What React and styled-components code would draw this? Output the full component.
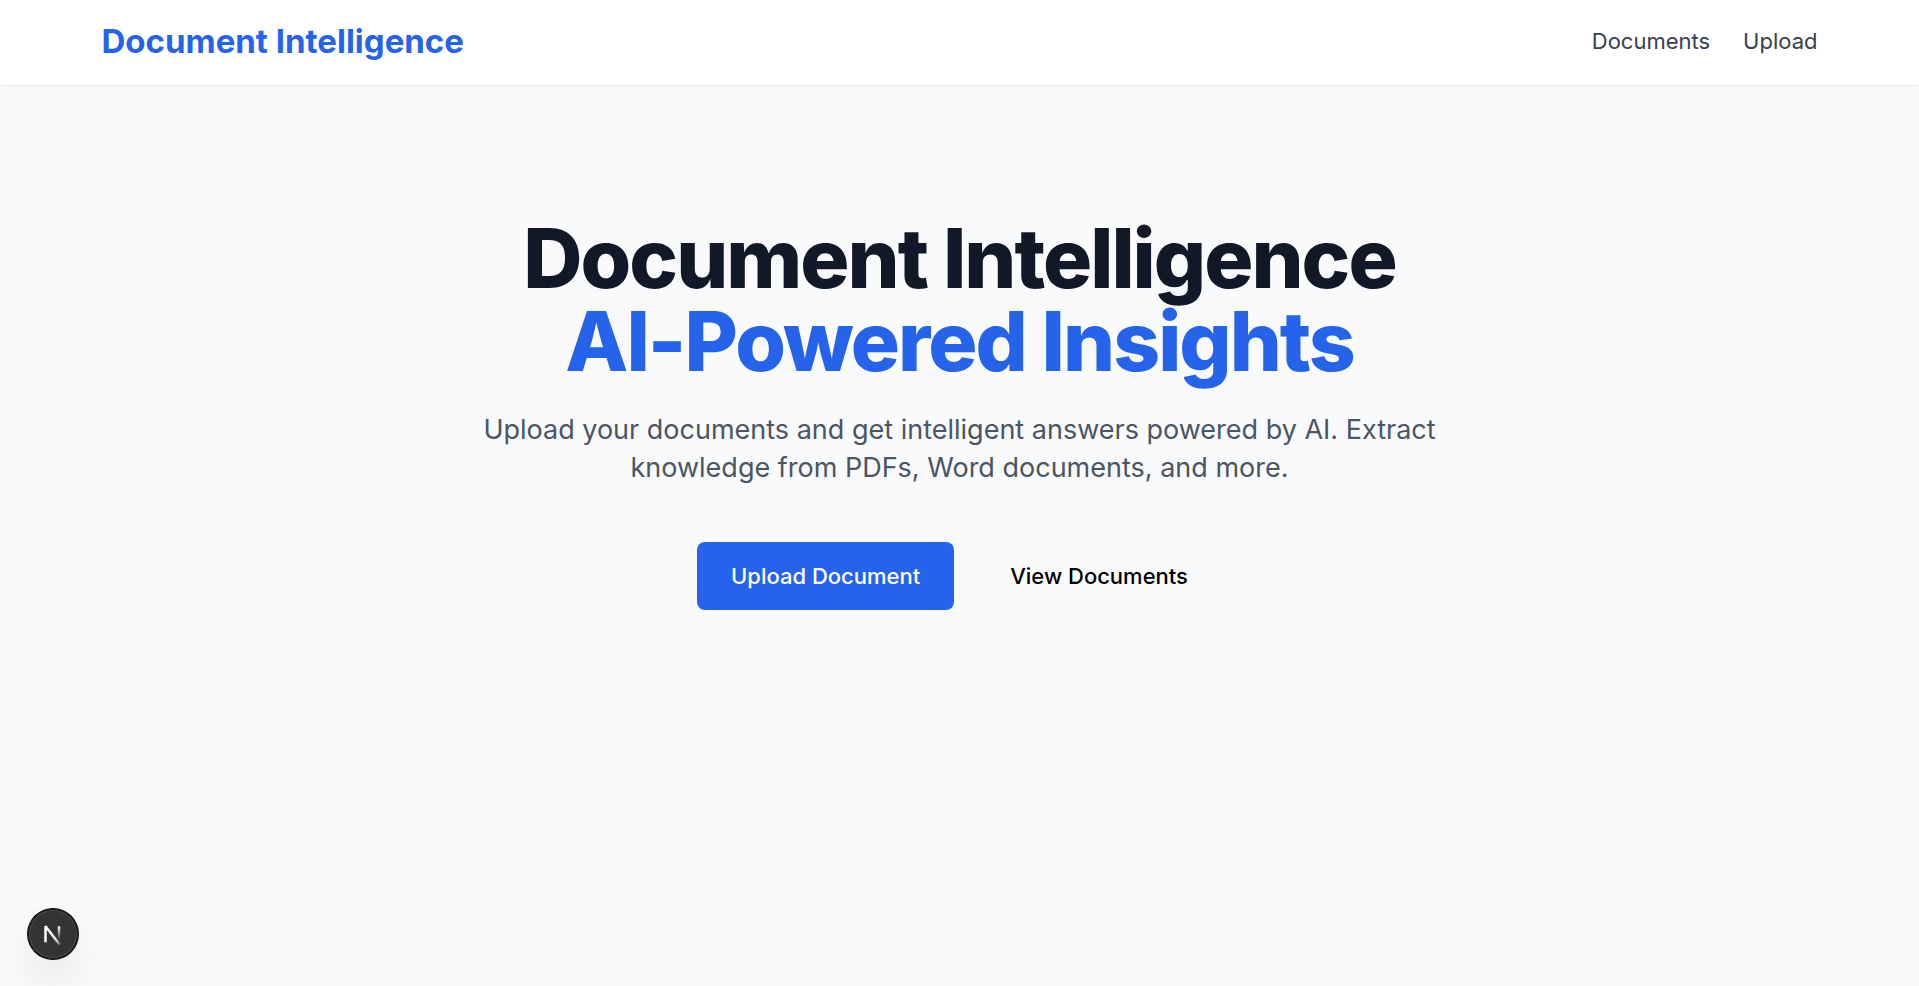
import React from "react";
import styled, { createGlobalStyle } from "styled-components";

const GlobalStyle = createGlobalStyle`
  *, *::before, *::after { box-sizing: border-box; }
  body {
    margin: 0;
    background: #f9fafb;
    color: #000;
    font-family: Inter, "Liberation Sans", sans-serif;
  }
`;

const Page = styled.div`
  min-height: 100vh;
  background: #f9fafc;
`;

const Header = styled.header`
  background: #fff;
  box-shadow: 0 1px 3px rgba(0, 0, 0, 0.08);
`;

const HeaderInner = styled.div`
  display: flex;
  align-items: center;
  justify-content: space-between;
  max-width: 1782px;
  margin: 0 auto;
  padding: 19px 33px 22px;
`;

const Brand = styled.a`
  color: #2563eb;
  font-size: 33px;
  font-weight: 700;
  line-height: 44px;
  text-decoration: none;
`;

const Nav = styled.nav`
  display: flex;
  gap: 33px;
`;

const NavLink = styled.a`
  color: #374151;
  font-size: 22px;
  line-height: 33px;
  text-decoration: none;
`;

const Hero = styled.main`
  display: flex;
  flex-direction: column;
  align-items: center;
  padding: 132px 33px;
  text-align: center;
`;

const Title = styled.h1`
  margin: 0;
  color: #111827;
  font-size: 82px;
  font-weight: 800;
  line-height: 83px;
  letter-spacing: -2px;
`;

const Accent = styled.span`
  display: block;
  color: #2563eb;
`;

const Lead = styled.p`
  max-width: 1056px;
  margin: 28px 0 0;
  color: #4b5563;
  font-size: 27px;
  line-height: 38px;
`;

const Actions = styled.div`
  display: flex;
  gap: 22px;
  margin-top: 55px;
`;

const Action = styled.button`
  padding: 17px 33px;
  border: 1px solid transparent;
  border-radius: 8px;
  background: ${(p) => (p.$primary ? "#2563eb" : "transparent")};
  background-clip: border-box;
  color: ${(p) => (p.$primary ? "#fff" : "#000")};
  font-family: inherit;
  font-size: 22px;
  font-weight: 500;
  line-height: 32px;
  cursor: pointer;
`;

const DevBadge = styled.button`
  position: fixed;
  left: 28px;
  bottom: 27px;
  display: flex;
  width: 50px;
  height: 50px;
  padding: 0;
  border: 0;
  border-radius: 50%;
  background: #333;
  box-shadow: 0 0 0 1px #0a0a0a, inset 0 0 0 1px #171717,
    inset 0 0 0 2px #4a4a4a, 0 22px 44px -8px rgba(0, 0, 0, 0.16);
  cursor: pointer;
`;

function NextMark() {
  return (
    <svg width="50" height="50" viewBox="0 0 50 50" fill="none" aria-hidden="true">
      <defs>
        <linearGradient id="diagonal" x1="27" y1="28" x2="33" y2="36" gradientUnits="userSpaceOnUse">
          <stop stopColor="#fff" />
          <stop offset="0.6" stopColor="#fff" stopOpacity="0.6" />
          <stop offset="1" stopColor="#fff" stopOpacity="0" />
        </linearGradient>
        <linearGradient id="stem" x1="31" y1="17" x2="31" y2="31" gradientUnits="userSpaceOnUse">
          <stop stopColor="#fff" />
          <stop offset="1" stopColor="#fff" stopOpacity="0" />
        </linearGradient>
      </defs>
      <path d="M17.5 33.3V17.3L32.6 36.8" stroke="url(#diagonal)" strokeWidth="2.5" strokeLinejoin="bevel" />
      <path d="M31 17.3V33" stroke="url(#stem)" strokeWidth="2.5" />
    </svg>
  );
}

export default function App() {
  return (
    <>
      <GlobalStyle />
      <Page>
        <Header>
          <HeaderInner>
            <Brand href="#">Document Intelligence</Brand>
            <Nav>
              <NavLink href="#documents">Documents</NavLink>
              <NavLink href="#upload">Upload</NavLink>
            </Nav>
          </HeaderInner>
        </Header>
        <Hero>
          <Title>
            Document Intelligence
            <Accent>AI-Powered Insights</Accent>
          </Title>
          <Lead>
            Upload your documents and get intelligent answers powered by AI. Extract knowledge from
            PDFs, Word documents, and more.
          </Lead>
          <Actions>
            <Action type="button" $primary>Upload Document</Action>
            <Action type="button">View Documents</Action>
          </Actions>
        </Hero>
        <DevBadge type="button" aria-label="Open Next.js Dev Tools">
          <NextMark />
        </DevBadge>
      </Page>
    </>
  );
}
